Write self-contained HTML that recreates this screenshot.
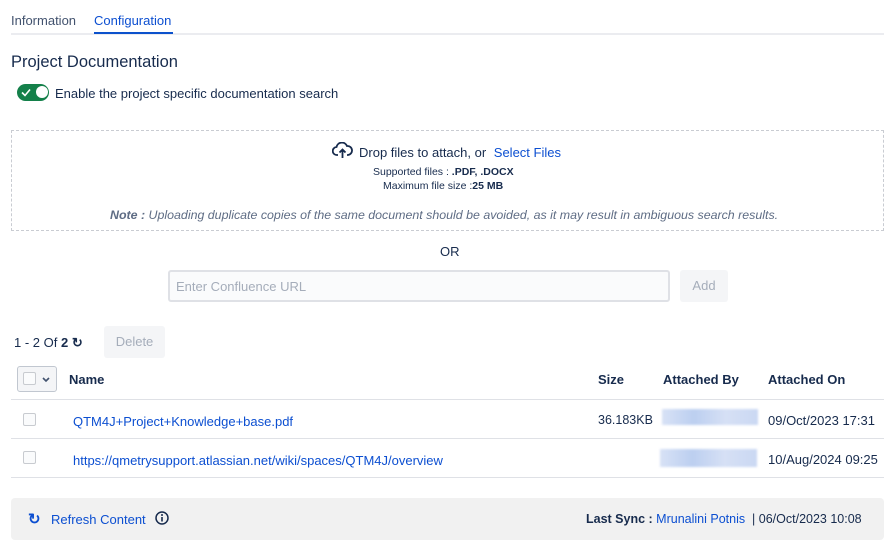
<!DOCTYPE html>
<html><head><meta charset="utf-8"><style>
*{margin:0;padding:0;box-sizing:border-box}
body{width:884px;height:543px;background:#fff;font-family:"Liberation Sans",sans-serif;color:#172b4d;font-size:13px;position:relative;overflow:hidden}
.a{position:absolute;white-space:nowrap}
.link{color:#0c4fd1}
.b{font-weight:bold}
.cb{position:absolute;width:13px;height:13px;border:1px solid #c8cbd0;border-radius:2px;background:#fafbfc}
.hr{position:absolute;left:11px;width:873px;height:1px;background:#dfe1e6}
.blur{position:absolute;height:16px;background:linear-gradient(90deg,#d8e2f6,#bccff0,#d6e0f5,#cad8f3);filter:blur(1px)}
</style></head><body>
<div class="a" style="left:11px;top:13px;color:#42526e">Information</div>
<div class="a link" style="left:94px;top:13px">Configuration</div>
<div class="a" style="left:11px;top:33px;width:873px;height:2px;background:#ebecf0"></div>
<div class="a" style="left:94px;top:32px;width:79px;height:2px;background:#0c52cc"></div>
<div class="a" style="left:11px;top:53px;font-size:16.5px">Project Documentation</div>
<div class="a" style="left:17px;top:84px;width:32px;height:17px;border-radius:9px;background:#14804a"></div>
<div class="a" style="left:36px;top:86px;width:12px;height:12px;border-radius:50%;background:#fff"></div>
<svg class="a" style="left:21px;top:88px" width="10" height="9"><path d="M1 4.5l3 3 5-6" stroke="#fff" stroke-width="1.6" fill="none"/></svg>
<div class="a" style="left:55px;top:86px">Enable the project specific documentation search</div>
<div class="a" style="left:11px;top:130px;width:873px;height:101px;border:1px dashed #c9ccd2"></div>
<svg class="a" style="left:332px;top:142px" width="21" height="18" viewBox="0 0 21 18"><path d="M6 13H5a4 4 0 0 1-.5-8A5.5 5.5 0 0 1 15 4a4 4 0 0 1 1 9h-1M10.5 16V8M7.5 10.5l3-3 3 3" stroke="#172b4d" stroke-width="1.8" fill="none"/></svg>
<div class="a" style="left:359px;top:145px">Drop files to attach, or <span class="link" style="margin-left:4px">Select Files</span></div>
<div class="a" style="left:373px;top:166px;font-size:10.5px">Supported files : <b>.PDF, .DOCX</b></div>
<div class="a" style="left:383px;top:180px;font-size:10.5px">Maximum file size :<b>25 MB</b></div>
<div class="a" style="left:110px;top:208px;font-size:12.4px;color:#5e6c84;font-style:italic"><b>Note :</b> Uploading duplicate copies of the same document should be avoided, as it may result in ambiguous search results.</div>
<div class="a" style="left:440px;top:244px">OR</div>
<div class="a" style="left:168px;top:270px;width:502px;height:32px;border:2px solid #dfe1e6;border-radius:3px;background:#fafbfc;color:#a5adba;padding:7px 6px">Enter Confluence URL</div>
<div class="a" style="left:680px;top:270px;width:48px;height:32px;background:#f4f5f7;border-radius:3px;color:#a5adba;text-align:center;line-height:32px">Add</div>
<div class="a" style="left:14px;top:335px">1 - 2 Of <b>2</b> <span style="font-weight:bold">↻</span></div>
<div class="a" style="left:104px;top:326px;width:61px;height:32px;background:#f4f5f7;border-radius:3px;color:#a5adba;text-align:center;line-height:32px">Delete</div>
<div class="a" style="left:17px;top:366px;width:40px;height:26px;border:1px solid #c1c7d0;border-radius:3px;background:#f4f5f7"></div>
<div class="cb" style="left:23px;top:372px"></div>
<svg class="a" style="left:42px;top:377px" width="8" height="6"><path d="M1 1l3 3 3-3" stroke="#42526e" stroke-width="1.6" fill="none"/></svg>
<div class="a b" style="left:69px;top:372px">Name</div>
<div class="a b" style="left:598px;top:372px">Size</div>
<div class="a b" style="left:663px;top:372px">Attached By</div>
<div class="a b" style="left:768px;top:372px">Attached On</div>
<div class="hr" style="top:399px"></div>
<div class="cb" style="left:23px;top:413px"></div>
<div class="a link" style="left:73px;top:414px">QTM4J+Project+Knowledge+base.pdf</div>
<div class="a" style="left:598px;top:413px;font-size:12.5px">36.183KB</div>
<div class="blur" style="left:662px;top:409px;width:96px"></div>
<div class="a" style="left:768px;top:413px">09/Oct/2023 17:31</div>
<div class="hr" style="top:438px"></div>
<div class="cb" style="left:23px;top:451px"></div>
<div class="a link" style="left:73px;top:453px">https://qmetrysupport.atlassian.net/wiki/spaces/QTM4J/overview</div>
<div class="blur" style="left:660px;top:449px;width:97px;height:18px"></div>
<div class="a" style="left:768px;top:452px">10/Aug/2024 09:25</div>
<div class="hr" style="top:477px"></div>
<div class="a" style="left:11px;top:498px;width:873px;height:42px;background:#f1f1f1;border-radius:4px"></div>
<div class="a link b" style="left:28px;top:510px;font-size:15px">↻</div>
<div class="a link" style="left:51px;top:512px">Refresh Content</div>
<svg class="a" style="left:155px;top:511px" width="14" height="14"><circle cx="7" cy="7" r="6" stroke="#172b4d" stroke-width="1.5" fill="none"/><path d="M7 6v4.5" stroke="#172b4d" stroke-width="1.6"/><circle cx="7" cy="4" r="1" fill="#172b4d"/></svg>
<div class="a" style="left:586px;top:512px;font-size:12.5px"><b>Last Sync :</b> <span class="link">Mrunalini Potnis</span> &nbsp;| 06/Oct/2023 10:08</div>
</body></html>
